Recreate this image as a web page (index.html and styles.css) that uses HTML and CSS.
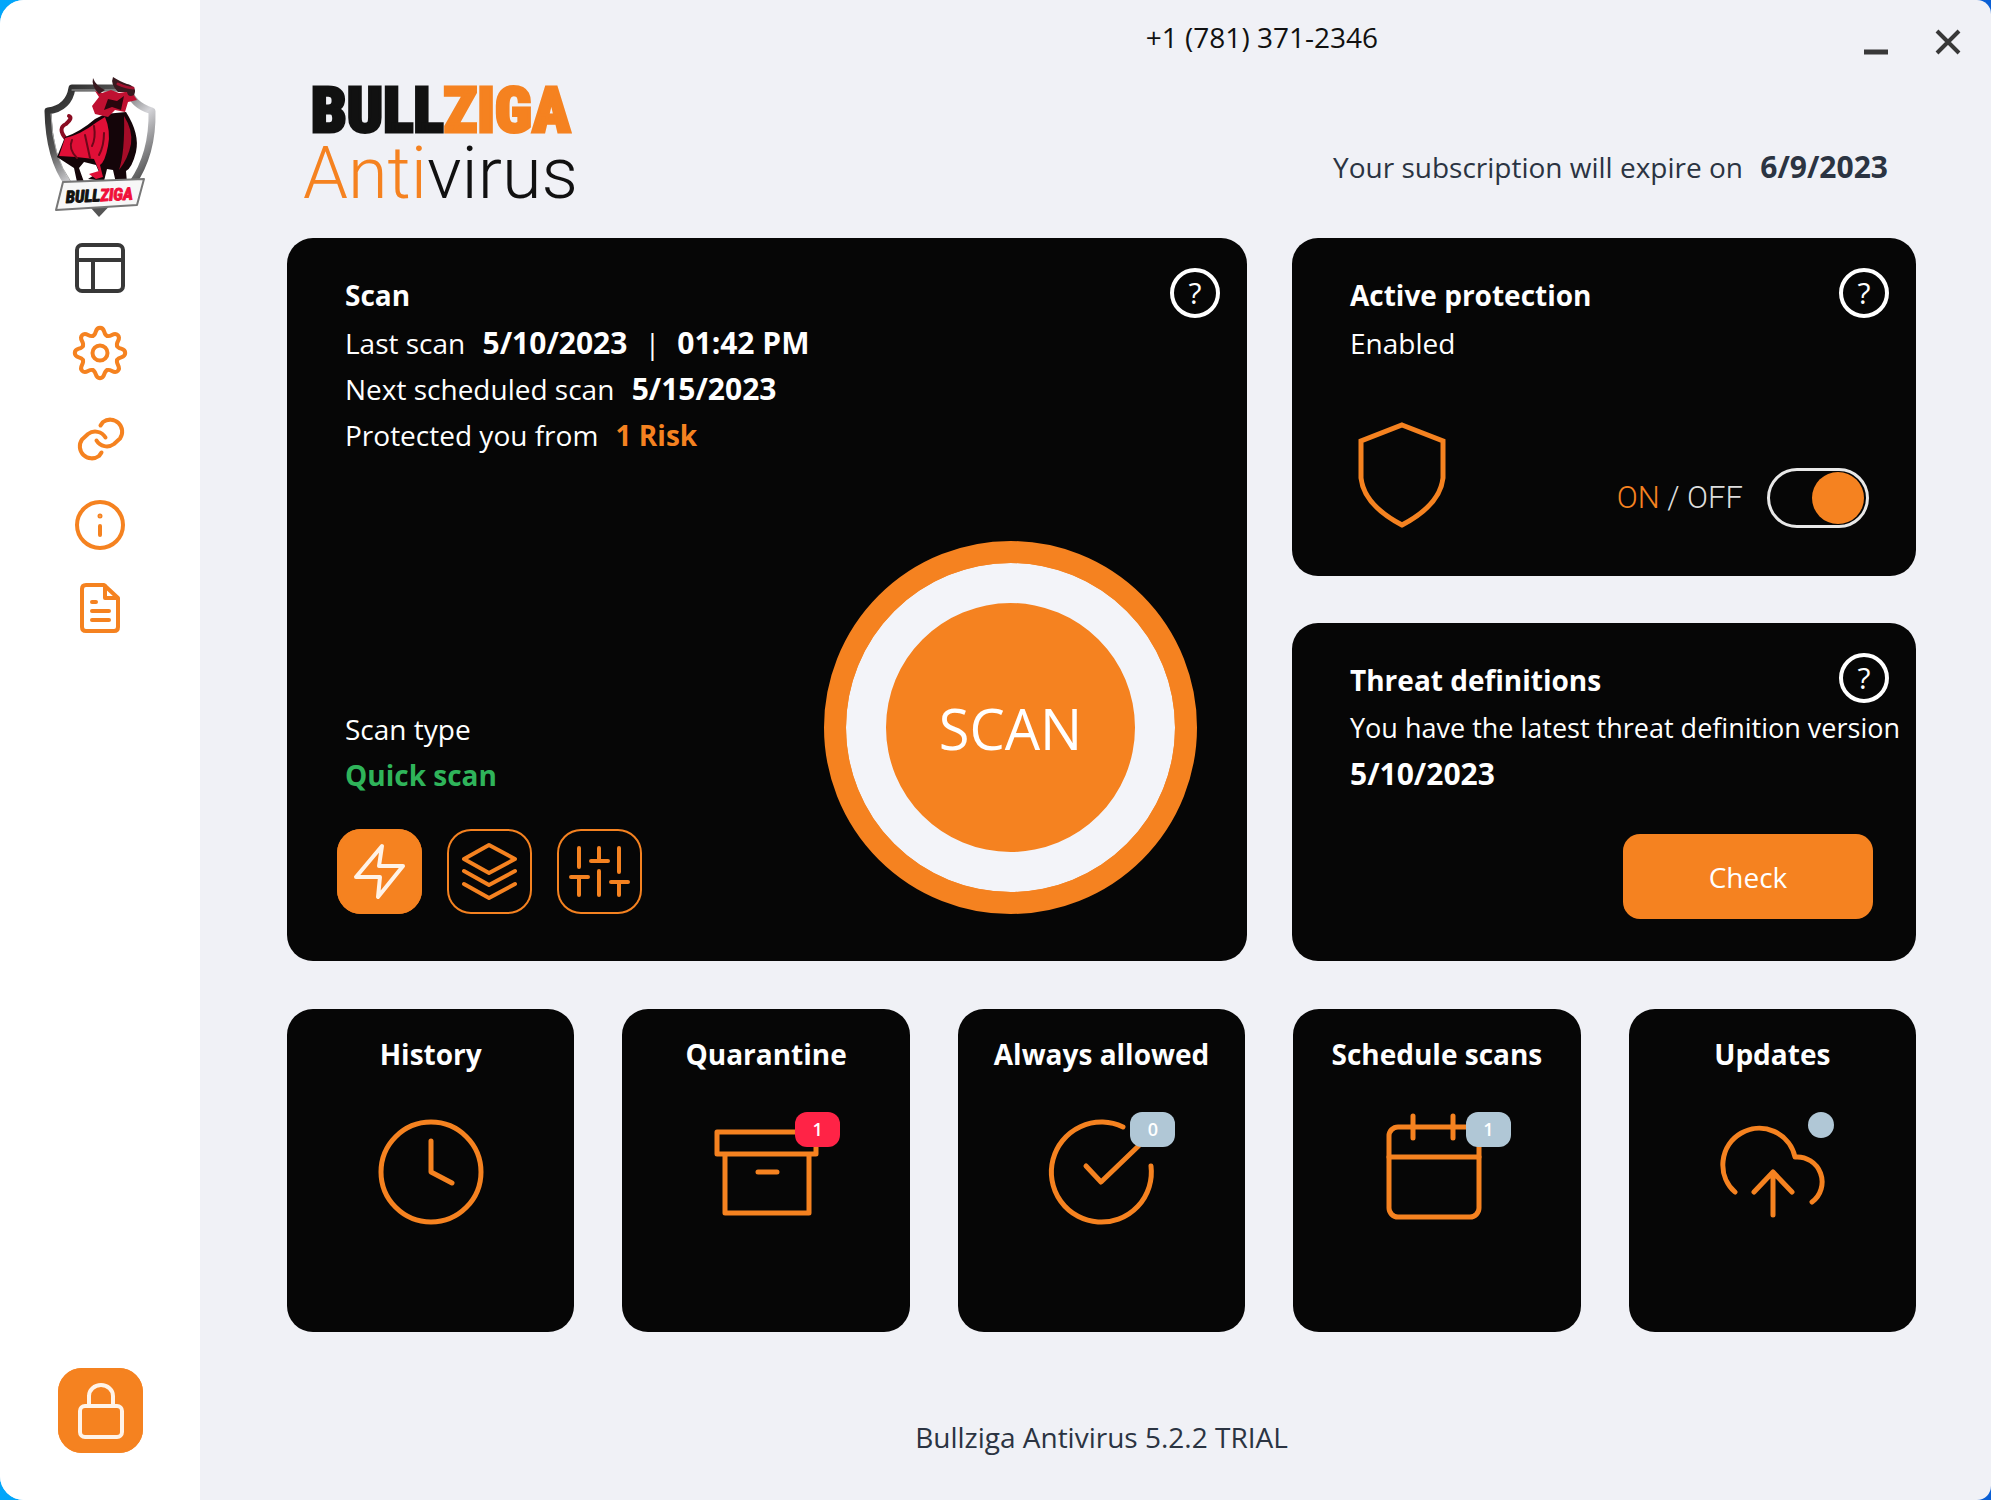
FILE: index.html
```html
<!DOCTYPE html>
<html lang="en">
<head>
    <meta charset="UTF-8">
    <meta name="viewport" content="width=device-width, initial-scale=1.0">
    <title>Bullziga Antivirus</title>
    <link rel="stylesheet" href="styles.css">
</head>
<body>
    <div class="app">
        <aside class="sidebar">
            <svg class="emblem" viewBox="0 0 116 142" role="img" aria-label="Bullziga emblem">
                <defs>
                    <linearGradient id="steel" x1="0" y1="0" x2="1" y2="1">
                        <stop offset="0" stop-color="#222"/>
                        <stop offset="0.35" stop-color="#555"/>
                        <stop offset="0.6" stop-color="#d5d5d9"/>
                        <stop offset="1" stop-color="#333"/>
                    </linearGradient>
                </defs>
                <path d="M40 122 L57 141 L76 121 Z" fill="#555"/>
                <path d="M30 12 H86 Q90 29 110 35 Q111 78 90 108 H26 Q7 82 6 35 Q27 32 30 12 Z" fill="#fff" stroke="url(#steel)" stroke-width="7"/>
                <path d="M30 14 H85 M9 38 Q10 80 29 106" fill="none" stroke="#aaa" stroke-width="1"/>
                <path d="M24 63 Q15 52 24 48 Q31 42 27 40" fill="none" stroke="#8a0c22" stroke-width="4" stroke-linecap="round"/>
                <path d="M23 61 Q38 56 53 43 L63 38 L84 36 Q98 58 94 76 Q90 92 84 95 L85 107 H74 L71 94 L65 93 L62 105 L46 103 L57 96 L54 89 L42 86 L37 92 L42 106 H35 L32 92 L15 81 Z" fill="#140509"/>
                <path d="M23 62 Q38 59 55 46 L63 41 Q69 55 66 70 Q63 86 58 89 L61 101 L54 103 L47 98 L57 95 L52 83 L34 81 L17 80 Z" fill="#e00f37"/>
                <path d="M30 64 Q26 73 35 82 M43 59 L48 82 M62 57 Q62 70 57 79 M52 50 Q54 62 50 70" fill="none" stroke="#6d0719" stroke-width="2"/>
                <path d="M82 40 Q91 54 89 68 Q86 83 77 94 Q83 76 82 40 Z" fill="#a50c28"/>
                <path d="M57 21 L53 15 L60 17 L69 14 L77 17 L89 15 L95 24 L86 26 L83 36 L73 34 L66 41 L53 38 L50 30 Z" fill="#c01031"/>
                <path d="M66 23 L75 25 L82 20 L79 34 L70 31 L62 34 Z" fill="#2a060d"/>
                <path d="M57 18 Q49 10 51 2 Q54 10 63 14 Z M76 16 Q68 8 71 1 Q79 6 85 8 Q96 11 92 19 Q86 22 85 16 Z" fill="#39191f"/>
                <path d="M76 8 Q85 12 91 12" stroke="#a51230" stroke-width="3" fill="none"/>
                <path d="M21 106 L102 103 L95 129 L14 134 Z" fill="#f7f7f7" stroke="#777" stroke-width="2"/>
                <text class="emblem-text" x="24" y="127" transform="rotate(-3 24 127)">BULL<tspan class="emblem-red">ZIGA</tspan></text>
            </svg>

            <nav class="side-nav">
                <a href="#" class="dark" aria-label="Dashboard">
                    <svg viewBox="0 0 60 60" stroke-width="4"><rect x="7" y="7" width="46" height="46" rx="5"/><path d="M7 22 H53 M23 22 V53"/></svg>
                </a>
                <a href="#" aria-label="Settings">
                    <svg viewBox="-30 -30 60 60" stroke-width="4">
                        <defs><path id="tooth" d="M-7.1 -17.1 C-3 -18.8 -5.6 -25.2 0 -25.2 C5.6 -25.2 3 -18.8 7.1 -17.1"/></defs>
                        <circle r="7.5"/>
                        <use href="#tooth"/>
                        <use href="#tooth" transform="rotate(45)"/>
                        <use href="#tooth" transform="rotate(90)"/>
                        <use href="#tooth" transform="rotate(135)"/>
                        <use href="#tooth" transform="rotate(180)"/>
                        <use href="#tooth" transform="rotate(225)"/>
                        <use href="#tooth" transform="rotate(270)"/>
                        <use href="#tooth" transform="rotate(315)"/>
                    </svg>
                </a>
                <a href="#" aria-label="Links">
                    <svg viewBox="0 0 60 60" stroke-width="4">
                        <path id="chain" d="M30.5 17.5 L33 14 A12 12 0 0 1 50 30.5 L44 36 A12 12 0 0 1 26.5 32.5"/>
                        <use href="#chain" transform="rotate(180 31 31)"/>
                    </svg>
                </a>
                <a href="#" aria-label="Information">
                    <svg viewBox="0 0 60 60" stroke-width="4"><circle cx="30" cy="32" r="23"/><path d="M30 33 V42"/><circle cx="30" cy="23" r="1" stroke-width="3"/></svg>
                </a>
                <a href="#" aria-label="Reports">
                    <svg viewBox="0 0 60 60" stroke-width="4"><path d="M34 7 H16 Q12 7 12 11 V49 Q12 53 16 53 H44 Q48 53 48 49 V20 Z"/><path d="M35 8 V20 H47"/><path d="M22 24 H26 M22 33 H39 M22 42 H39"/></svg>
                </a>
            </nav>

            <button type="button" class="square-btn filled lock-btn" aria-label="Lock">
                <svg viewBox="0 0 85 85"><rect x="22" y="38" width="42" height="31" rx="5"/><path d="M31 38 V28 A12 11 0 0 1 55 28 V38"/></svg>
            </button>
        </aside>

        <main class="main">
            <div class="topbar">
                <span class="phone">+1 (781) 371-2346</span>
                <button type="button" class="window-btn" aria-label="Minimize">
                    <svg viewBox="0 0 28 28"><path d="M2 24 H26" stroke-width="5"/></svg>
                </button>
                <button type="button" class="window-btn" aria-label="Close">
                    <svg viewBox="0 0 28 28"><path d="M3 3 L25 25 M25 3 L3 25" stroke-width="4"/></svg>
                </button>
            </div>

            <header class="header">
                <h1 class="brand">
                    <span class="brand-name">BULL<span class="orange">ZIGA</span></span>
                    <span class="brand-product"><span class="orange">Anti</span>virus</span>
                </h1>
                <p class="subscription">Your subscription will expire on <b>6/9/2023</b></p>
            </header>

            <section class="panels">
                <article class="card scan-card">
                    <button type="button" class="help" aria-label="Help">?</button>
                    <div class="card-text">
                        <h2>Scan</h2>
                        <p>Last scan <b>5/10/2023</b> <i>|</i> <b>01:42 PM</b></p>
                        <p>Next scheduled scan <b>5/15/2023</b></p>
                        <p>Protected you from <strong class="orange">1 Risk</strong></p>
                    </div>
                    <div class="card-bottom">
                        <div class="scan-type">
                            <div class="card-text">
                                <p>Scan type</p>
                                <p class="green">Quick scan</p>
                            </div>
                            <div class="type-buttons">
                                <button type="button" class="square-btn filled" aria-label="Quick scan">
                                    <svg viewBox="0 0 85 85"><path d="M45 17 L42 37 H66 L41 68 L43 48 H19 Z"/></svg>
                                </button>
                                <button type="button" class="square-btn" aria-label="Full scan">
                                    <svg viewBox="0 0 85 85"><path d="M42 16 L68 30 L42 44 L17 30 Z M17 42 L42 56 L68 42 M17 55 L42 69 L68 55"/></svg>
                                </button>
                                <button type="button" class="square-btn" aria-label="Custom scan">
                                    <svg viewBox="0 0 85 85"><path d="M22 19 V38 M14 48 H31 M22 48 V66 M42 19 V32 M34 32 H51 M42 42 V66 M62 19 V43 M54 53 H71 M62 53 V66"/></svg>
                                </button>
                            </div>
                        </div>
                        <button type="button" class="scan-btn">SCAN</button>
                    </div>
                </article>

                <article class="card">
                    <button type="button" class="help" aria-label="Help">?</button>
                    <div class="card-text">
                        <h2>Active protection</h2>
                        <p>Enabled</p>
                    </div>
                    <div class="card-bottom">
                        <svg class="shield" viewBox="0 0 88 106"><path d="M44 3 L85 19 V56 Q82 83 44 103 Q6 83 3 56 V19 Z"/></svg>
                        <label class="toggle"><span><span class="orange">ON</span> / OFF</span> <input type="checkbox" checked></label>
                    </div>
                </article>

                <article class="card">
                    <button type="button" class="help" aria-label="Help">?</button>
                    <div class="card-text">
                        <h2>Threat definitions</h2>
                        <p class="note">You have the latest threat definition version</p>
                        <p class="version">5/10/2023</p>
                    </div>
                    <div class="card-bottom">
                        <button type="button" class="check-btn">Check</button>
                    </div>
                </article>
            </section>

            <section class="tiles">
                <a href="#" class="tile">
                    <h2>History</h2>
                    <span class="tile-icon">
                        <svg viewBox="0 0 120 120"><circle cx="60" cy="60" r="50"/><path d="M60 29 V60 L81 71"/></svg>
                    </span>
                </a>
                <a href="#" class="tile">
                    <h2>Quarantine</h2>
                    <span class="tile-icon">
                        <svg viewBox="0 0 120 120"><path d="M11 20 H110 V42 H11 Z M19 42 V101 H103 V42 M52 60 H71"/></svg>
                        <span class="badge red">1</span>
                    </span>
                </a>
                <a href="#" class="tile">
                    <h2>Always allowed</h2>
                    <span class="tile-icon">
                        <svg viewBox="0 0 120 120"><path d="M82 15 A50 50 0 1 0 110 54 M45 54 L60 70 L111 21"/></svg>
                        <span class="badge">0</span>
                    </span>
                </a>
                <a href="#" class="tile">
                    <h2>Schedule scans</h2>
                    <span class="tile-icon">
                        <svg viewBox="0 0 120 120"><rect x="12" y="15" width="90" height="90" rx="9"/><path d="M12 45 H102 M36 4 V26 M76 4 V26"/></svg>
                        <span class="badge">1</span>
                    </span>
                </a>
                <a href="#" class="tile">
                    <h2>Updates</h2>
                    <span class="tile-icon">
                        <svg viewBox="0 0 120 120"><path d="M23 80 A36.5 36.5 0 1 1 83 45 A25 25 0 0 1 100 90 M61 103 V60 M42 80 L61 60 L80 80"/></svg>
                        <span class="badge dot"></span>
                    </span>
                </a>
            </section>

            <footer class="footer">Bullziga Antivirus 5.2.2 TRIAL</footer>
        </main>
    </div>
</body>
</html>
```

FILE: styles.css
```css
* {
    box-sizing: border-box;
}
body {
    margin: 0;
    background: linear-gradient(90deg, #02a6fa, #0a5fd5);
    font-family: 'Open Sans', 'Noto Sans', sans-serif;
    font-size: 28px;
    line-height: 46px;
    color: #111;
}
h1, h2, p {
    margin: 0;
    font-size: inherit;
}
button {
    font-family: inherit;
    padding: 0;
    border: none;
    background: none;
    cursor: pointer;
}
a {
    color: inherit;
    text-decoration: none;
}
svg {
    display: block;
    fill: none;
    stroke: #f58220;
    stroke-linecap: round;
    stroke-linejoin: round;
}
b {
    font-size: 30px;
    line-height: 30px;
}
.orange {
    color: #f58220;
}
.app {
    display: flex;
    min-height: 100vh;
    border-radius: 24px 14px 14px 24px;
    overflow: hidden;
    background: #f0f1f6;
}

/* sidebar */
.sidebar {
    width: 200px;
    flex-shrink: 0;
    display: flex;
    flex-direction: column;
    align-items: center;
    padding: 76px 0 47px;
    background: #fff;
}
.emblem {
    width: 116px;
    height: 142px;
    stroke: none;
}
.emblem-text {
    font-family: 'Roboto Condensed', 'Liberation Sans', sans-serif;
    font-size: 17px;
    font-weight: bold;
    font-style: italic;
    fill: #111;
    stroke: #111;
    stroke-width: 1px;
}
.emblem-red {
    fill: #f0103a;
    stroke: #f0103a;
}
.side-nav {
    display: flex;
    flex-direction: column;
    gap: 25px;
    margin-top: 20px;
}
.side-nav svg {
    width: 60px;
    height: 60px;
}
.side-nav .dark svg {
    stroke: #383838;
}
.square-btn {
    width: 85px;
    height: 85px;
    border-radius: 24px;
    box-shadow: inset 0 0 0 2px #f58220;
}
.square-btn svg {
    stroke-width: 4px;
}
.square-btn.filled {
    background: #f58220;
}
.square-btn.filled svg {
    stroke: #fff3e8;
}
.lock-btn {
    margin-top: auto;
}

/* main area */
.main {
    flex: 1;
    display: flex;
    flex-direction: column;
    padding: 0 75px 0 87px;
}
.topbar {
    display: flex;
    justify-content: flex-end;
    align-items: center;
    gap: 44px;
    height: 74px;
    margin-right: -46px;
}
.phone {
    margin-right: 440px;
}
.window-btn {
    margin-top: 10px;
}
.window-btn svg {
    width: 28px;
    height: 28px;
    stroke: #383838;
    stroke-linecap: butt;
}
.header {
    display: flex;
    justify-content: space-between;
    align-items: center;
    height: 164px;
    padding: 0 28px 24px 16px;
}
.brand {
    display: flex;
    flex-direction: column;
    font-weight: normal;
}
.brand-name {
    padding-left: 8px;
    font-family: 'Roboto Condensed', 'Liberation Sans', sans-serif;
    font-size: 63px;
    font-weight: 900;
    line-height: 60px;
    -webkit-text-stroke: 3px currentColor;
}
.brand-product {
    font-family: Roboto, sans-serif;
    font-size: 72px;
    font-weight: 300;
    line-height: 66px;
}
.subscription {
    margin-top: 46px;
    color: #2b3442;
}
.subscription b {
    margin-left: 10px;
}
.panels {
    display: grid;
    grid-template-columns: minmax(0, 960fr) minmax(0, 624fr);
    grid-template-rows: 338px 338px;
    gap: 47px 45px;
}
.card {
    position: relative;
    display: flex;
    flex-direction: column;
    justify-content: space-between;
    padding: 34px 43px 42px 50px;
    border-radius: 26px;
    background: #060606;
    color: #fff;
}
.scan-card {
    grid-row: span 2;
    padding: 34px 50px 47px;
}
.card-text {
    padding-left: 8px;
    white-space: nowrap;
}
.card-text b, .card-text i, .card-text strong {
    margin-left: 10px;
    font-style: normal;
}
.card h2 {
    margin-bottom: 2px;
}
.note {
    font-size: 27px;
}
.version {
    font-size: 30px;
    font-weight: bold;
}
.green {
    color: #2fb45a;
    font-weight: bold;
}
.help {
    position: absolute;
    top: 30px;
    right: 27px;
    width: 50px;
    height: 50px;
    border: 4px solid #fff;
    border-radius: 50%;
    color: #fff;
    font-size: 30px;
    line-height: 42px;
}
.card-bottom {
    display: flex;
    justify-content: space-between;
    align-items: flex-end;
}
.type-buttons {
    display: flex;
    gap: 25px;
    margin-top: 31px;
}
.scan-btn {
    width: 373px;
    height: 373px;
    border: 22px solid #f58220;
    border-radius: 50%;
    background: #f58220;
    box-shadow: inset 0 0 0 40px #f3f4f9;
    color: #fff;
    font-size: 56px;
}
.shield {
    width: 88px;
    height: 106px;
    margin: 0 0 6px 16px;
    stroke-width: 5px;
    stroke-linejoin: miter;
}
.toggle {
    display: flex;
    align-items: center;
    gap: 24px;
    margin: 0 4px 6px 0;
    font-family: Roboto, sans-serif;
    font-size: 31px;
    font-weight: 300;
    color: #ddd;
}
.toggle input {
    appearance: none;
    display: flex;
    align-items: center;
    justify-content: flex-end;
    width: 102px;
    height: 60px;
    margin: 0;
    padding-right: 2px;
    border: 3px solid #e8e8e8;
    border-radius: 30px;
}
.toggle input::before {
    content: "";
    width: 52px;
    height: 52px;
    border-radius: 50%;
    background: #f58220;
}
.toggle input:not(:checked) {
    justify-content: flex-start;
}
.check-btn {
    width: 250px;
    height: 85px;
    margin-left: auto;
    border-radius: 17px;
    background: #f58220;
    color: #fff;
    font-size: 28px;
}

/* bottom tiles */
.tiles {
    display: grid;
    grid-template-columns: repeat(5, 1fr);
    gap: 48px;
    margin-top: 48px;
}
.tile {
    display: flex;
    flex-direction: column;
    align-items: center;
    gap: 35px;
    height: 323px;
    padding-top: 22px;
    border-radius: 26px;
    background: #060606;
    color: #fff;
    white-space: nowrap;
}
.tile-icon {
    position: relative;
    width: 120px;
    height: 120px;
}
.tile-icon svg {
    stroke-width: 5px;
}
.badge {
    position: absolute;
    top: 0;
    left: 89px;
    width: 45px;
    height: 35px;
    border-radius: 12px;
    background: #b0c7d6;
    font-size: 18px;
    font-weight: 600;
    line-height: 35px;
    text-align: center;
}
.badge.red {
    background: #ff2346;
}
.badge.dot {
    left: 96px;
    width: 26px;
    height: 26px;
    border-radius: 50%;
}
.footer {
    flex: 1;
    display: flex;
    align-items: center;
    justify-content: center;
    padding-top: 42px;
    color: #2b3442;
}
```
